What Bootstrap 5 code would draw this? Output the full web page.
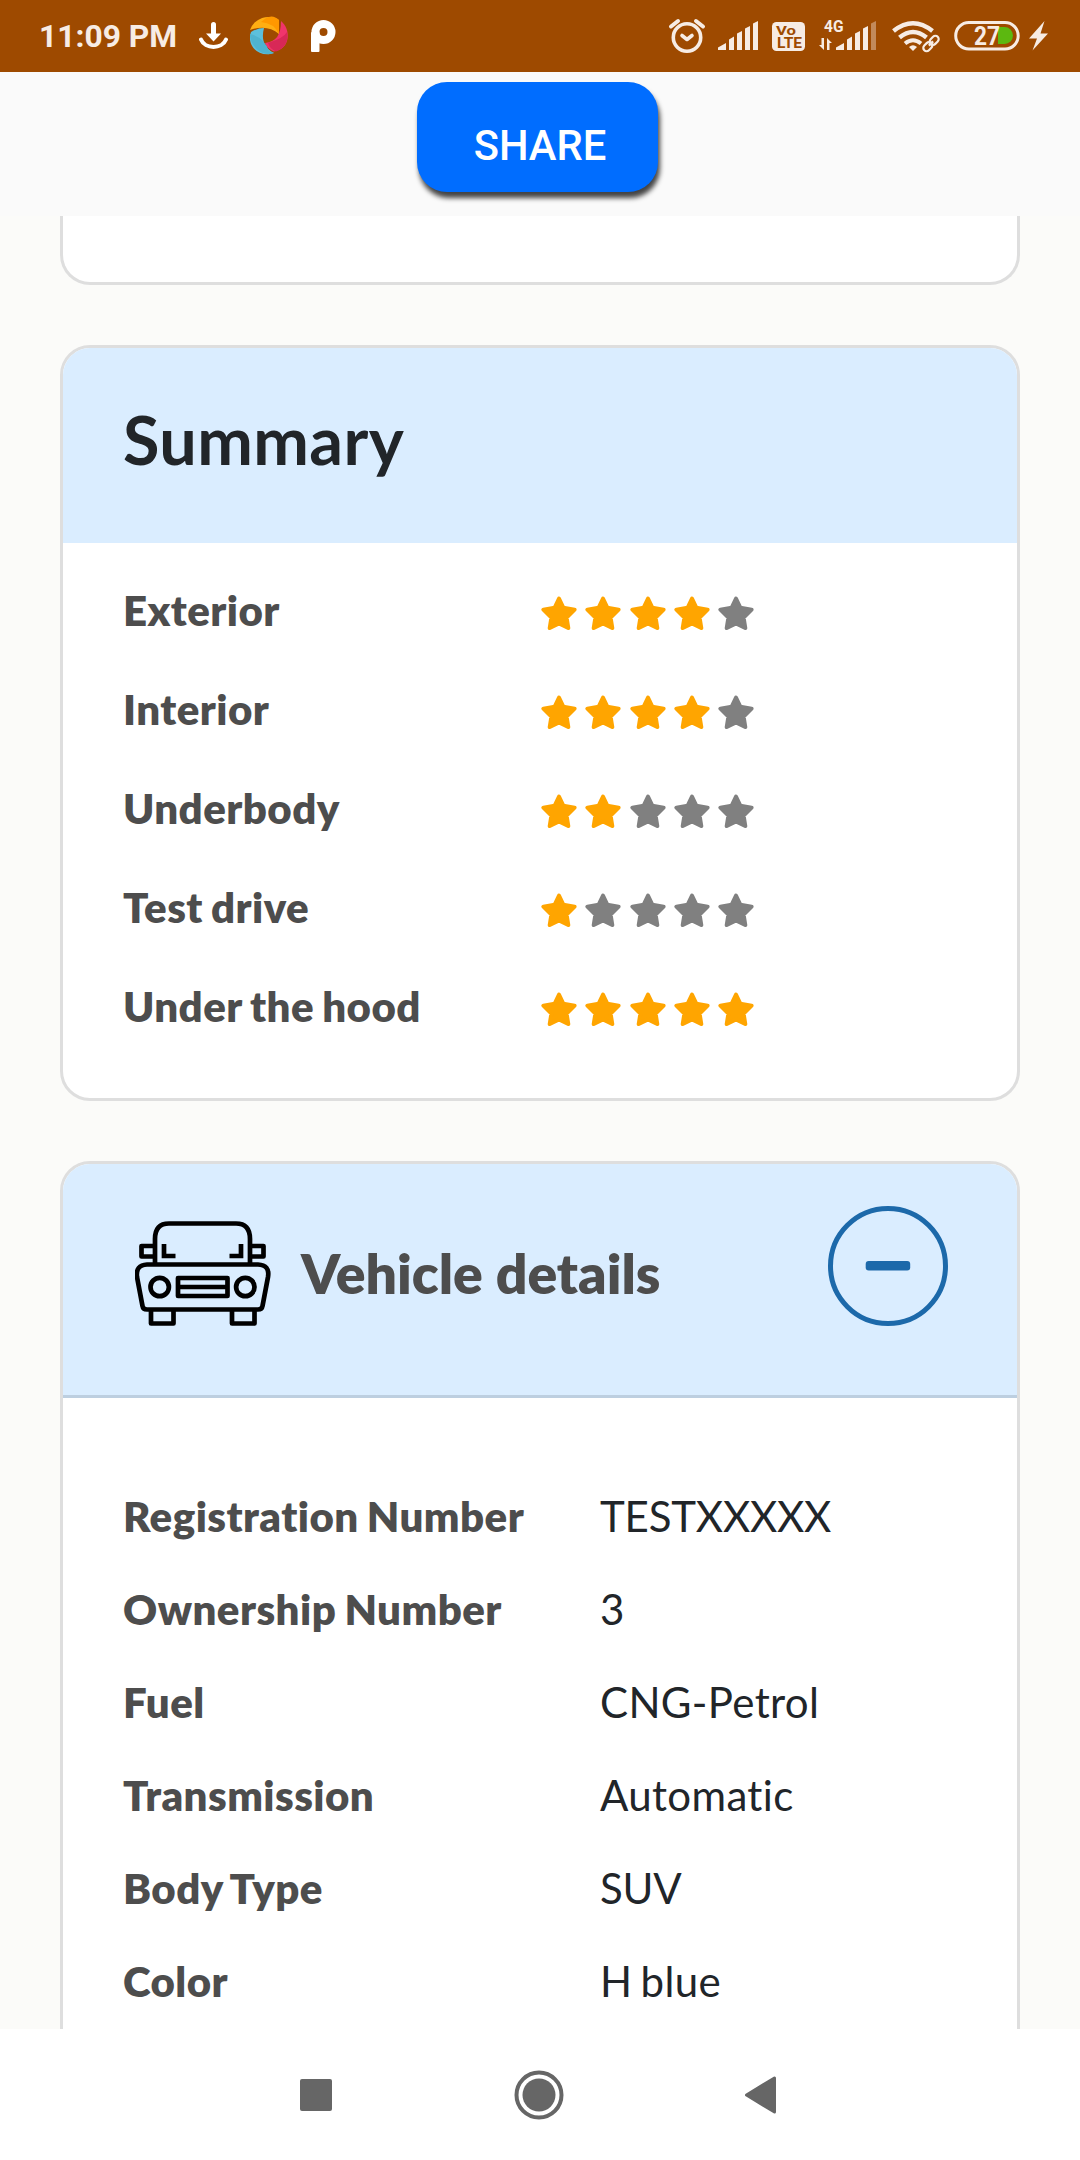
<!DOCTYPE html>
<html lang="en">
<head>
<meta charset="utf-8">
<meta name="viewport" content="width=device-width, initial-scale=1">
<title>Vehicle inspection report</title>
<link href="https://cdn.jsdelivr.net/npm/bootstrap@5.3.0/dist/css/bootstrap.min.css" rel="stylesheet">
<style>
  body { height: 2160px; background: #fbfbf9; font-family: Lato, sans-serif; color: #212529; }
  svg { display: block; flex: none; }
  .status-bar { height: 72px; background: #9e4a00; color: #f7ece4; padding-left: 39px; padding-right: 31px; font-family: Roboto, sans-serif; }
  .clock { font-size: 31.8px; font-weight: 700; line-height: 73px; width: 161px; white-space: nowrap; }
  .share-bar { height: 144px; background: #fafafa; padding-top: 10px; }
  .btn-share { --bs-btn-color: #fff; --bs-btn-bg: #006dff; --bs-btn-border-width: 0; width: 241px; height: 110px; margin-left: -5px;
    padding: 17px 0 0 5px; border-radius: 30px; box-shadow: 2px 6px 5px 0 #444; font: 500 41.7px/1 Roboto, sans-serif; }
  .page-view { height: 1813px; padding: 0 60px; }
  .panel { border: 3px solid #dedede; border-radius: 30px; --bs-card-inner-border-radius: 27px; background: #fff; }
  .panel + .panel { margin-top: 60px; }
  .panel-tail { height: 69px; border-top: 0; border-top-left-radius: 0; border-top-right-radius: 0; }
  .panel-top { background: #daedff; border: 0; padding: 0 60px; }
  .summary-top { height: 195px; }
  .summary-top h2 { font-size: 66.5px; font-weight: 700; line-height: 80px; letter-spacing: .4px; margin: 51px 0 0; }
  .rating-list { height: 555px; padding: 17px 60px 0; }
  .rating-row { height: 99px; }
  .field-name { font-size: 42px; font-weight: 800; color: #4d4d4d; letter-spacing: .45px; word-spacing: -2px; line-height: 60px; white-space: nowrap; }
  .rating-row .field-name { width: 418px; }
  .stars { gap: 8.25px; padding-top: 8px; }
  .star { width: 36px; height: 35px; fill: #808080; stroke: #808080; stroke-width: 4; stroke-linejoin: round; }
  .star.on { fill: #ffa500; stroke: #ffa500; }
  .detail-top { height: 234px; border-bottom: 3px solid #bdcfe0; padding: 42px 69px 0 72px; }
  .detail-top h2 { font-size: 55.3px; font-weight: 800; color: #4d4d4d; line-height: 66px; margin: 34px 0 0 30px; }
  .field-list { padding: 88px 60px 0; }
  .field-row { height: 93px; padding-bottom: 33px; }
  .field-row .field-name { width: 477px; }
  .field-value { font-size: 42px; line-height: 60px; letter-spacing: .35px; word-spacing: -3px; }
  .field-value.caps { letter-spacing: -.2px; }
  .nav-keys { height: 131px; background: #fff; padding: 1px 303px 0 300px; }
</style>
</head>
<body class="d-flex flex-column overflow-hidden">

<svg width="0" height="0" class="position-absolute" aria-hidden="true">
  <symbol id="star" viewBox="0 0 36 35"><path d="M18 2.6 22.3 11.6 33.6 13.6 25.6 21.6 27.3 32 18 27.4 8.7 32 10.4 21.6 2.4 13.6 13.7 11.6Z"/></symbol>
</svg>

<header class="status-bar d-flex align-items-start flex-shrink-0">
  <div class="clock">11:09 PM</div>
  <svg width="465" height="72" viewBox="199 0 465 72">
    <g fill="none" stroke="#fff" stroke-width="4" stroke-linecap="round">
      <path d="M213.5 24.5V34" stroke-width="5"/>
      <path d="M201 39.5C205 49.5 222 49.5 226 39.5"/>
    </g>
    <path d="M206 33.5H221L213.5 41.5Z" fill="#fff"/>
    <path d="M250 30A19.5 19.5 0 0 1 279 20V34C271 27 261 26 250 30Z" fill="#ffae12"/>
    <path d="M266 18Q273 14 279 20V34Q274 23 261 22Z" fill="#ff9800"/>
    <path d="M281 21C291 29 291 49 274 51.500C268 49 266 46 265 43C276 42 281 35 281 21Z" fill="#f0356b"/>
    <path d="M268 43Q284 38 287 32C289 42 284 49 276 51.500Q270 49 268 43Z" fill="#d82857"/>
    <path d="M251 32Q258 28 264 28C261 39 264 48 274 53C260 58 246 47 251 32Z" fill="#5cc0dc"/>
    <path d="M250 34Q264 37 269 51L274 53Q266 56 259 51Q250 44 250 34Z" fill="#4fb3cf"/>
    <circle cx="323.500" cy="32" r="8" fill="none" stroke="#fff" stroke-width="8"/>
    <rect x="311" y="32" width="8.500" height="20" rx="1" fill="#fff"/>
  </svg>
  <svg width="385" height="72" viewBox="664 0 385 72" fill="#f7ece4">
    <g fill="none" stroke="#f7ece4" stroke-width="3.600" stroke-linecap="round">
      <circle cx="687" cy="37.500" r="13.700"/>
      <path d="M671 26.500 678 21M703 26.500 696 21" stroke-width="4"/>
      <path d="M682 35.500 687 39.500 692 35.500" stroke-linejoin="round"/>
    </g>
    <path d="M718 50V47.500L726 43V50ZM729 50V39.500L734 36.500V50ZM737 50V33.500L742 31V50ZM745 50V28.500L750 26V50ZM753 50V23.500L758 21V50Z"/>
    <rect x="772" y="22" width="33" height="29" rx="4.500"/>
    <g fill="#9e4a00" font-weight="700" font-family="Roboto, sans-serif">
      <text x="776" y="35" font-size="13.500" textLength="20" lengthAdjust="spacingAndGlyphs">Vo</text>
      <text x="777" y="48" font-size="15" textLength="25" lengthAdjust="spacingAndGlyphs">LTE</text>
    </g>
    <text x="824" y="31.500" font-size="16.500" font-weight="700" textLength="19.500" lengthAdjust="spacingAndGlyphs">4G</text>
    <path d="M819 45H821.500V38H824V50ZM827 50V38L832 43H829.500V50Z"/>
    <path d="M836 50V47.500L844 43V50ZM847 50V39.500L852 36.500V50ZM855 50V33.500L860 31V50ZM863 50V28.500L868 26V50Z"/>
    <path d="M871 50V23.500L876 21V50Z" opacity=".4"/>
    <g fill="none" stroke="#f7ece4" stroke-width="4.500">
      <path d="M893.500 31Q913 15.500 932.500 31"/>
      <path d="M899.500 37.500Q913 26.500 926.500 37.500"/>
      <path d="M905 43.500Q913 37 921 43.500" stroke-width="4"/>
    </g>
    <path d="M909 47Q913 43.500 917 47L913 51Z"/>
    <path d="M926 49 936 39" stroke="#9e4a00" stroke-width="9"/>
    <g fill="none" stroke="#f7ece4" stroke-width="2.200" transform="rotate(-45 931 43.500)">
      <rect x="921.500" y="40.200" width="10" height="6.600" rx="3.300"/>
      <rect x="930.500" y="40.200" width="10" height="6.600" rx="3.300"/>
      <path d="M928 43.500H934"/>
    </g>
    <rect x="955.700" y="22.500" width="62.500" height="26.500" rx="13.200" fill="none" stroke="#f7ece4" stroke-width="3"/>
    <path d="M998 27H1004.500A8.500 8.500 0 0 1 1004.500 44H998Z" fill="#5cb810"/>
    <text x="974" y="45" font-size="26" font-weight="700" textLength="26" lengthAdjust="spacingAndGlyphs">27</text>
    <path d="M1044.500 21 1029 38.500H1037L1032.500 50.500 1048 33.500H1040.500Z"/>
  </svg>
</header>

<div class="share-bar d-flex justify-content-center flex-shrink-0">
  <button type="button" class="btn btn-share">SHARE</button>
</div>

<main class="page-view overflow-hidden flex-shrink-0">
  <section class="card panel panel-tail"></section>

  <section class="card panel">
    <div class="card-header panel-top summary-top d-flex align-items-start"><h2>Summary</h2></div>
    <div class="rating-list">
      <div class="rating-row d-flex align-items-center"><div class="field-name">Exterior</div><div class="stars d-flex"><svg class="star on"><use href="#star"/></svg><svg class="star on"><use href="#star"/></svg><svg class="star on"><use href="#star"/></svg><svg class="star on"><use href="#star"/></svg><svg class="star"><use href="#star"/></svg></div></div>
      <div class="rating-row d-flex align-items-center"><div class="field-name">Interior</div><div class="stars d-flex"><svg class="star on"><use href="#star"/></svg><svg class="star on"><use href="#star"/></svg><svg class="star on"><use href="#star"/></svg><svg class="star on"><use href="#star"/></svg><svg class="star"><use href="#star"/></svg></div></div>
      <div class="rating-row d-flex align-items-center"><div class="field-name">Underbody</div><div class="stars d-flex"><svg class="star on"><use href="#star"/></svg><svg class="star on"><use href="#star"/></svg><svg class="star"><use href="#star"/></svg><svg class="star"><use href="#star"/></svg><svg class="star"><use href="#star"/></svg></div></div>
      <div class="rating-row d-flex align-items-center"><div class="field-name">Test drive</div><div class="stars d-flex"><svg class="star on"><use href="#star"/></svg><svg class="star"><use href="#star"/></svg><svg class="star"><use href="#star"/></svg><svg class="star"><use href="#star"/></svg><svg class="star"><use href="#star"/></svg></div></div>
      <div class="rating-row d-flex align-items-center"><div class="field-name">Under the hood</div><div class="stars d-flex"><svg class="star on"><use href="#star"/></svg><svg class="star on"><use href="#star"/></svg><svg class="star on"><use href="#star"/></svg><svg class="star on"><use href="#star"/></svg><svg class="star on"><use href="#star"/></svg></div></div>
    </div>
  </section>

  <section class="card panel">
    <div class="card-header panel-top detail-top d-flex align-items-start">
      <svg width="136" height="120" viewBox="135 1206 136 120" fill="none" stroke="#000" stroke-width="4.700" stroke-linejoin="round">
        <path d="M155 1264V1239Q155 1223.500 169 1223.500H236Q250 1223.500 250 1239V1264"/>
        <path d="M155 1246H141.500V1256.500H155M250 1246H263.500V1256.500H250"/>
        <path d="M164 1244V1256H175.500M241 1244V1256H229.500" stroke-linejoin="miter"/>
        <path d="M147 1264.500H258Q270 1265 268 1277L262.500 1306Q262 1309.500 258 1309.500H147Q143 1309.500 142.500 1306L137 1277Q135.500 1265 147 1264.500Z"/>
        <circle cx="159.700" cy="1287" r="9.200"/><circle cx="245.300" cy="1287" r="9.200"/>
        <rect x="178" y="1278" width="49.500" height="18"/>
        <path d="M178 1287H227.500"/>
        <path d="M151 1310V1323.500H173.500V1310M232 1310V1323.500H254.500V1310"/>
      </svg>
      <h2>Vehicle details</h2>
      <svg class="ms-auto" width="120" height="120" viewBox="0 0 120 120" fill="none" stroke="#1c69aa">
        <circle cx="60" cy="60" r="57.500" stroke-width="5"/>
        <rect x="37.700" y="55" width="44.500" height="9.500" rx="3" fill="#1c69aa" stroke="none"/>
      </svg>
    </div>
    <div class="field-list">
      <div class="field-row d-flex"><div class="field-name">Registration Number</div><div class="field-value caps">TESTXXXXX</div></div>
      <div class="field-row d-flex"><div class="field-name">Ownership Number</div><div class="field-value">3</div></div>
      <div class="field-row d-flex"><div class="field-name">Fuel</div><div class="field-value">CNG-Petrol</div></div>
      <div class="field-row d-flex"><div class="field-name">Transmission</div><div class="field-value">Automatic</div></div>
      <div class="field-row d-flex"><div class="field-name">Body Type</div><div class="field-value caps">SUV</div></div>
      <div class="field-row d-flex"><div class="field-name">Color</div><div class="field-value">H blue</div></div>
      <div class="field-row"></div>
    </div>
  </section>
</main>

<footer class="nav-keys d-flex justify-content-between align-items-center flex-shrink-0">
  <svg width="32" height="34" viewBox="0 0 32 34" fill="#666"><rect y="1" width="32" height="32" rx="2"/></svg>
  <svg width="50" height="50" viewBox="0 0 50 50" fill="#666"><circle cx="25" cy="25" r="22.500" fill="none" stroke="#666" stroke-width="4"/><circle cx="25" cy="25" r="16.500"/></svg>
  <svg width="32" height="38" viewBox="0 0 32 38" fill="#666" stroke="#666" stroke-width="3" stroke-linejoin="round"><path d="M1.500 19 29.500 2V36Z"/></svg>
</footer>

<script src="https://cdn.jsdelivr.net/npm/bootstrap@5.3.0/dist/js/bootstrap.bundle.min.js"></script>
</body>
</html>
